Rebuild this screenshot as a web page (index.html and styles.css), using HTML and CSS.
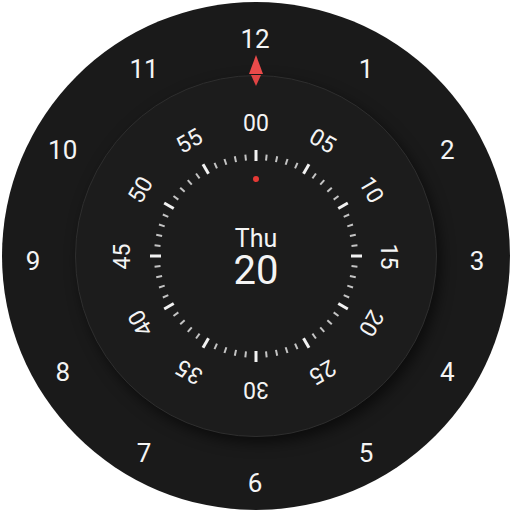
FILE: index.html
```html
<!DOCTYPE html>
<html>
<head>
<meta charset="utf-8">
<link rel="stylesheet" href="styles.css">
</head>
<body>
<div class="face">
  <div class="h">12</div><div class="h">1</div><div class="h">2</div><div class="h">3</div>
  <div class="h">4</div><div class="h">5</div><div class="h">6</div><div class="h">7</div>
  <div class="h">8</div><div class="h">9</div><div class="h">10</div><div class="h">11</div>
  <div class="dial">
    <div class="m">00</div><div class="m">05</div><div class="m">10</div><div class="m">15</div>
    <div class="m">20</div><div class="m">25</div><div class="m">30</div><div class="m">35</div>
    <div class="m">40</div><div class="m">45</div><div class="m">50</div><div class="m">55</div>
    <svg class="ticks" width="220" height="220" viewBox="-110 -110 220 220">
      <defs>
        <line id="ma" x1="0" y1="-106" x2="0" y2="-95" stroke="#f2f2f2" stroke-width="3"/>
        <line id="mi" x1="0" y1="-102" x2="0" y2="-96" stroke="#c4c4c4" stroke-width="2"/>
      </defs>
      <use href="#ma"/><use href="#ma" transform="rotate(30)"/><use href="#ma" transform="rotate(60)"/>
      <use href="#ma" transform="rotate(90)"/><use href="#ma" transform="rotate(120)"/><use href="#ma" transform="rotate(150)"/>
      <use href="#ma" transform="rotate(180)"/><use href="#ma" transform="rotate(210)"/><use href="#ma" transform="rotate(240)"/>
      <use href="#ma" transform="rotate(270)"/><use href="#ma" transform="rotate(300)"/><use href="#ma" transform="rotate(330)"/>
      <use href="#mi" transform="rotate(6)"/><use href="#mi" transform="rotate(12)"/><use href="#mi" transform="rotate(18)"/><use href="#mi" transform="rotate(24)"/>
      <use href="#mi" transform="rotate(36)"/><use href="#mi" transform="rotate(42)"/><use href="#mi" transform="rotate(48)"/><use href="#mi" transform="rotate(54)"/>
      <use href="#mi" transform="rotate(66)"/><use href="#mi" transform="rotate(72)"/><use href="#mi" transform="rotate(78)"/><use href="#mi" transform="rotate(84)"/>
      <use href="#mi" transform="rotate(96)"/><use href="#mi" transform="rotate(102)"/><use href="#mi" transform="rotate(108)"/><use href="#mi" transform="rotate(114)"/>
      <use href="#mi" transform="rotate(126)"/><use href="#mi" transform="rotate(132)"/><use href="#mi" transform="rotate(138)"/><use href="#mi" transform="rotate(144)"/>
      <use href="#mi" transform="rotate(156)"/><use href="#mi" transform="rotate(162)"/><use href="#mi" transform="rotate(168)"/><use href="#mi" transform="rotate(174)"/>
      <use href="#mi" transform="rotate(186)"/><use href="#mi" transform="rotate(192)"/><use href="#mi" transform="rotate(198)"/><use href="#mi" transform="rotate(204)"/>
      <use href="#mi" transform="rotate(216)"/><use href="#mi" transform="rotate(222)"/><use href="#mi" transform="rotate(228)"/><use href="#mi" transform="rotate(234)"/>
      <use href="#mi" transform="rotate(246)"/><use href="#mi" transform="rotate(252)"/><use href="#mi" transform="rotate(258)"/><use href="#mi" transform="rotate(264)"/>
      <use href="#mi" transform="rotate(276)"/><use href="#mi" transform="rotate(282)"/><use href="#mi" transform="rotate(288)"/><use href="#mi" transform="rotate(294)"/>
      <use href="#mi" transform="rotate(306)"/><use href="#mi" transform="rotate(312)"/><use href="#mi" transform="rotate(318)"/><use href="#mi" transform="rotate(324)"/>
      <use href="#mi" transform="rotate(336)"/><use href="#mi" transform="rotate(342)"/><use href="#mi" transform="rotate(348)"/><use href="#mi" transform="rotate(354)"/>
    </svg>
    <div class="dot"></div>
    <div class="date">
      <div class="day">Thu</div>
      <div class="num">20</div>
    </div>
  </div>
  <svg class="marker" width="14" height="32" viewBox="0 0 14 32">
    <polygon points="7,0 14,19 0,19" fill="#ea4a4a"/>
    <polygon points="2,20 12,20 7,31" fill="#e04444"/>
  </svg>
</div>
</body>
</html>
```

FILE: styles.css
```css
html, body {
  margin: 0;
  padding: 0;
  background: #ffffff;
}

body {
  width: 512px;
  height: 512px;
  display: grid;
  place-items: center;
  font-family: Roboto, "Liberation Sans", sans-serif;
  color: #f4f4f4;
}

.face {
  position: relative;
  width: 508px;
  height: 508px;
  border-radius: 50%;
  background: #1a1a1a;
  display: grid;
  place-items: center;
}

.face > * {
  grid-area: 1 / 1;
}

.h {
  font-size: 26px;
  line-height: 1;
  transform: translate(-1px, 5px) rotate(var(--a)) translateY(-222px) rotate(calc(-1 * var(--a)));
}

.h:nth-child(1) { --a: 0deg; }
.h:nth-child(2) { --a: 30deg; }
.h:nth-child(3) { --a: 60deg; }
.h:nth-child(4) { --a: 90deg; }
.h:nth-child(5) { --a: 120deg; }
.h:nth-child(6) { --a: 150deg; }
.h:nth-child(7) { --a: 180deg; }
.h:nth-child(8) { --a: 210deg; }
.h:nth-child(9) { --a: 240deg; }
.h:nth-child(10) { --a: 270deg; }
.h:nth-child(11) { --a: 300deg; }
.h:nth-child(12) { --a: 330deg; }

.dial {
  width: 362px;
  height: 362px;
  box-sizing: border-box;
  border-radius: 50%;
  background: #1c1c1c;
  border: 1px solid #2e2e2e;
  box-shadow: 4px 6px 14px rgba(0, 0, 0, 0.55);
  display: grid;
  place-items: center;
}

.dial > * {
  grid-area: 1 / 1;
}

.m {
  font-size: 23px;
  line-height: 1;
  transform: rotate(var(--a)) translateY(-133px);
}

.m:nth-child(1) { --a: 0deg; }
.m:nth-child(2) { --a: 30deg; }
.m:nth-child(3) { --a: 60deg; }
.m:nth-child(4) { --a: 90deg; }
.m:nth-child(5) { --a: 120deg; }
.m:nth-child(6) { --a: 150deg; }
.m:nth-child(7) { --a: 180deg; }
.m:nth-child(8) { --a: 210deg; }
.m:nth-child(9) { --a: 240deg; }
.m:nth-child(10) { --a: 270deg; }
.m:nth-child(11) { --a: 300deg; }
.m:nth-child(12) { --a: 330deg; }

.ticks {
  display: block;
}

.dot {
  width: 6px;
  height: 6px;
  border-radius: 50%;
  background: #e53935;
  transform: translateY(-77px);
}

.date {
  display: flex;
  flex-direction: column;
  align-items: center;
  transform: translateY(2px);
}

.day {
  font-size: 25px;
  line-height: 1;
}

.num {
  font-size: 40px;
  line-height: 1;
}

.marker {
  position: absolute;
  left: 247px;
  top: 53px;
}
```
